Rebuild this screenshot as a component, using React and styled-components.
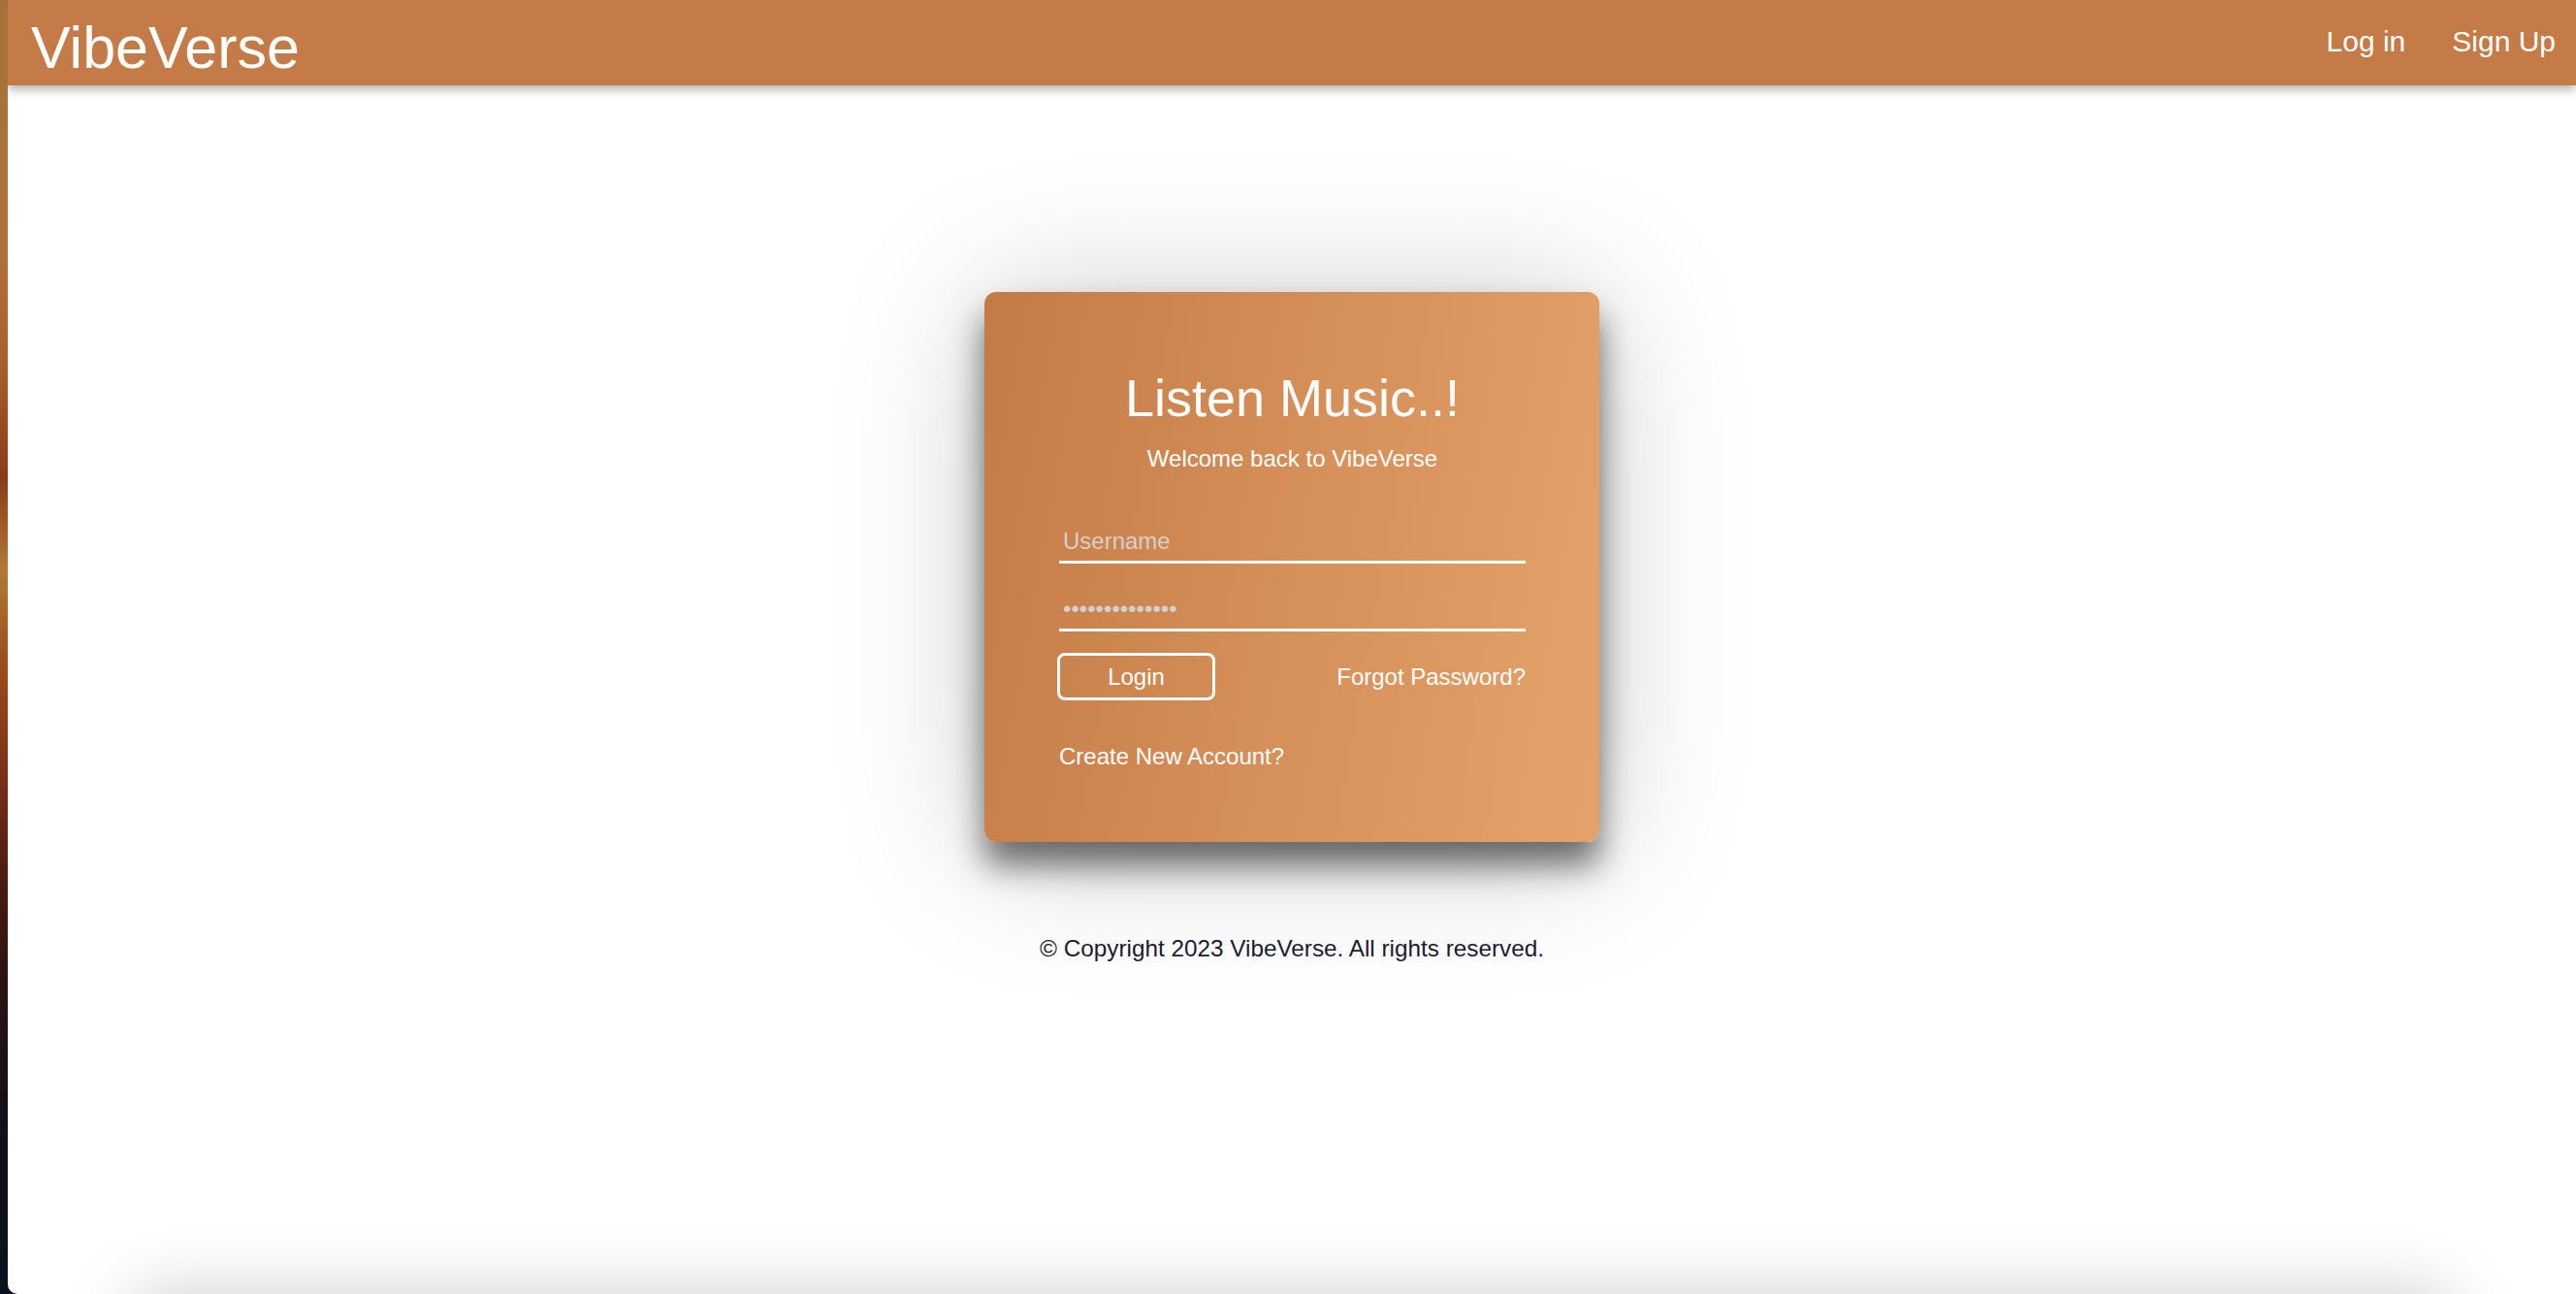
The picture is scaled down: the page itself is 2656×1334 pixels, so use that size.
import React from "react";
import styled, { createGlobalStyle } from "styled-components";

const GlobalStyle = createGlobalStyle`
	html, body {
		margin: 0;
		padding: 0;
		height: 100%;
	}
	body {
		font-family: "Liberation Sans", Helvetica, Arial, sans-serif;
		background: linear-gradient(
			180deg,
			#a3723a 0%,
			#b0703a 20%,
			#a9602c 28%,
			#8b3a18 37%,
			#b07a35 44%,
			#9a4a1a 52%,
			#7a3015 60%,
			#4a1a10 68%,
			#2a1212 76%,
			#101018 88%,
			#0a1220 100%
		);
	}
`;

const Desktop = styled.div`
	display: flex;
	height: 100vh;
	padding-left: 8px;
`;

const Window = styled.div`
	flex: 1;
	display: flex;
	flex-direction: column;
	height: 100vh;
	overflow: hidden;
	background: #ffffff;
	border-bottom-left-radius: 10px;
`;

const Header = styled.header`
	position: relative;
	z-index: 1;
	flex-shrink: 0;
	height: 88px;
	display: flex;
	align-items: flex-start;
	justify-content: space-between;
	padding: 0 21px 0 24px;
	background: #c47b48;
	box-shadow: 0 4px 10px rgba(0, 0, 0, 0.32);
`;

const Logo = styled.a`
	margin-top: 15px;
	font-size: 61px;
	line-height: 68px;
	color: #ffffff;
	text-decoration: none;
`;

const Nav = styled.nav`
	display: flex;
	gap: 48px;
	margin-top: 26px;
`;

const NavLink = styled.a`
	font-size: 30px;
	line-height: 34px;
	color: #ffffff;
	text-decoration: none;
`;

const Main = styled.main`
	flex-shrink: 0;
	height: calc(100vh - 88px);
	display: flex;
	flex-direction: column;
	align-items: center;
	padding-top: 213px;
	box-sizing: border-box;
`;

const Card = styled.form`
	width: 634px;
	box-sizing: border-box;
	padding: 78px 76px 74px 77px;
	display: flex;
	flex-direction: column;
	border-radius: 12px;
	background: linear-gradient(100deg, #c47a45 0%, #d48d57 45%, #e5a36b 100%);
	box-shadow: 0 24px 34px rgba(0, 0, 0, 0.55), 0 10px 150px rgba(0, 0, 0, 0.22);
	color: #ffffff;
`;

const Title = styled.h1`
	margin: 0;
	font-size: 54px;
	line-height: 62px;
	font-weight: 400;
	text-align: center;
`;

const Subtitle = styled.p`
	margin: 18px 0 0;
	font-size: 24px;
	line-height: 28px;
	text-align: center;
`;

const Input = styled.input`
	display: block;
	width: 100%;
	height: 44px;
	box-sizing: border-box;
	margin-top: ${(p) => p.$gap}px;
	padding: 0 4px;
	border: none;
	border-bottom: 3px solid #ffffff;
	background: transparent;
	outline: none;
	font-family: inherit;
	font-size: 24px;
	color: #d4d0cc;

	&::placeholder {
		color: #d4d0cc;
		opacity: 1;
	}
`;

const Actions = styled.div`
	display: flex;
	align-items: center;
	justify-content: space-between;
	margin: 22px 0 0 -2px;
`;

const LoginButton = styled.button`
	width: 163px;
	height: 49px;
	box-sizing: border-box;
	border: 3px solid #ffffff;
	border-radius: 8px;
	background: transparent;
	font-family: inherit;
	font-size: 24px;
	color: #ffffff;
	cursor: pointer;
`;

const TextLink = styled.a`
	font-size: 24px;
	line-height: 28px;
	color: #ffffff;
	text-decoration: none;
	margin-top: ${(p) => p.$gap || 0}px;
	align-self: ${(p) => p.$align || "auto"};
`;

const Footer = styled.footer`
	margin-top: 96px;
	font-size: 24.3px;
	line-height: 28px;
	color: #1b1b32;
`;

const PlayerBar = styled.div`
	flex-shrink: 0;
	height: 100px;
	margin: 0 130px;
	background: #ffffff;
	box-shadow: 0 0 70px rgba(0, 0, 0, 0.2);
`;

const App = () => (
	<>
		<GlobalStyle />
		<Desktop>
			<Window>
				<Header>
					<Logo href="#">VibeVerse</Logo>
					<Nav>
						<NavLink href="#">Log in</NavLink>
						<NavLink href="#">Sign Up</NavLink>
					</Nav>
				</Header>
				<Main>
					<Card onSubmit={(e) => e.preventDefault()}>
						<Title>Listen Music..!</Title>
						<Subtitle>Welcome back to VibeVerse</Subtitle>
						<Input $gap={50} type="text" placeholder="Username" />
						<Input
							$gap={26}
							type="password"
							defaultValue="passwordpasswo"
						/>
						<Actions>
							<LoginButton type="submit">Login</LoginButton>
							<TextLink href="#">Forgot Password?</TextLink>
						</Actions>
						<TextLink href="#" $gap={44} $align="flex-start">
							Create New Account?
						</TextLink>
					</Card>
					<Footer>© Copyright 2023 VibeVerse. All rights reserved.</Footer>
				</Main>
				<PlayerBar />
			</Window>
		</Desktop>
	</>
);

export default App;
